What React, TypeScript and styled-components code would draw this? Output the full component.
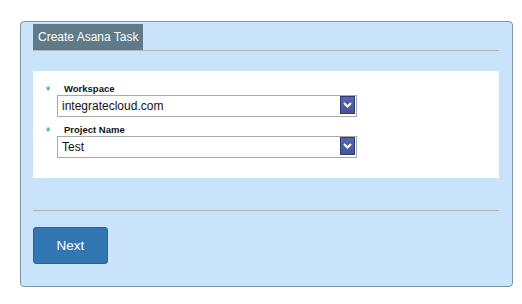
import React, { useState } from "react";
import styled, { createGlobalStyle } from "styled-components";

const GlobalStyle = createGlobalStyle`
  html, body {
    margin: 0;
    padding: 0;
    background: #ffffff;
    font-family: "Liberation Sans", Arial, sans-serif;
  }
`;

const Page = styled.div`
  padding: 21px 9px 17px 20px;
`;

const Panel = styled.div`
  width: 466px;
  background: #c9e3fa;
  border: 1px solid #7d93a6;
  border-radius: 4px;
  padding: 2px 13px 22px 12px;
`;

const Header = styled.div`
  display: flex;
  border-bottom: 1px solid #b4b4b4;
`;

const Title = styled.div`
  background: #5f7a88;
  color: #ffffff;
  font-size: 12px;
  height: 26px;
  line-height: 26px;
  padding: 0 4px 0 5px;
`;

const Form = styled.div`
  background: #ffffff;
  margin-top: 20px;
  padding: 11px 0 20px 9px;
  display: flex;
  flex-direction: column;
  gap: 6px;
`;

const Field = styled.div`
  display: grid;
  grid-template-columns: 12px 300px;
  column-gap: 3px;
`;

const Required = styled.span`
  color: #2e9a3a;
  font-size: 12px;
  line-height: 12px;
  padding-top: 3px;
  text-align: center;
`;

const FieldBody = styled.div`
  display: flex;
  flex-direction: column;
`;

const Label = styled.label`
  font-size: 9.5px;
  font-weight: bold;
  color: #111111;
  line-height: 11px;
  padding: 1px 0 0 7px;
  height: 12px;
`;

const SelectBox = styled.div`
  position: relative;
  height: 20px;
  border: 1px solid #a9a9a9;
  display: flex;
  align-items: center;
  padding-left: 4px;
  font-size: 12px;
  color: #111111;
  background: #ffffff;
`;

const Arrow = styled.div`
  position: absolute;
  right: 1px;
  top: 0;
  width: 15px;
  height: 18px;
  background: linear-gradient(#5867a9, #47559a);
  border: 1px solid #2e3b78;
  box-sizing: border-box;
  display: flex;
  align-items: center;
  justify-content: center;
`;

const Divider = styled.div`
  height: 1px;
  background: #b4b4b4;
  margin-top: 32px;
`;

const NextButton = styled.button`
  margin-top: 16px;
  width: 75px;
  height: 37px;
  background: #3276b1;
  border: 1px solid #2a6598;
  border-radius: 3px;
  color: #ffffff;
  font-family: "Liberation Sans", Arial, sans-serif;
  font-size: 13.5px;
  cursor: pointer;
`;

const ChevronDown: React.FC = () => (
  <svg width="9" height="6" viewBox="0 0 9 6">
    <path d="M1 1 L4.5 4.5 L8 1" fill="none" stroke="#ffffff" strokeWidth="2" />
  </svg>
);

interface SelectFieldProps {
  label: string;
  value: string;
}

const SelectField: React.FC<SelectFieldProps> = ({ label, value }) => (
  <Field>
    <Required>*</Required>
    <FieldBody>
      <Label>{label}</Label>
      <SelectBox>
        {value}
        <Arrow>
          <ChevronDown />
        </Arrow>
      </SelectBox>
    </FieldBody>
  </Field>
);

const App: React.FC = () => {
  const [workspace] = useState<string>("integratecloud.com");
  const [project] = useState<string>("Test");

  return (
    <>
      <GlobalStyle />
      <Page>
        <Panel>
          <Header>
            <Title>Create Asana Task</Title>
          </Header>
          <Form>
            <SelectField label="Workspace" value={workspace} />
            <SelectField label="Project Name" value={project} />
          </Form>
          <Divider />
          <NextButton>Next</NextButton>
        </Panel>
      </Page>
    </>
  );
};

export default App;
